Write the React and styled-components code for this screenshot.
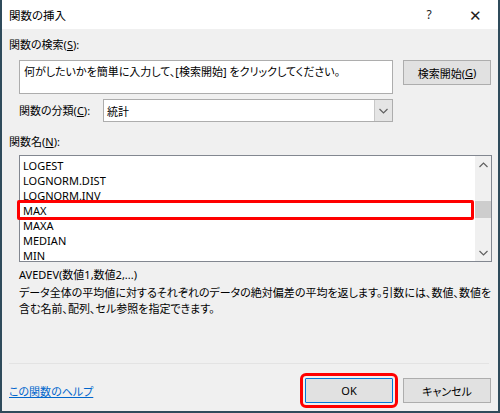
import React from "react";
import styled, { createGlobalStyle, css } from "styled-components";

const GlobalStyle = createGlobalStyle`
  html, body {
    margin: 0;
    padding: 0;
    background: #f0f0f0;
  }
  body {
    font-family: "Noto Sans", "Noto Sans CJK JP", sans-serif;
    font-size: 11px;
    color: #000;
    font-feature-settings: "palt";
  }
`;

const Window = styled.div`
  width: 500px;
  height: 413px;
  box-sizing: border-box;
  border: 2px solid #2f4b5b;
  border-top: none;
  background: #f0f0f0;
  display: flex;
  flex-direction: column;
`;

const TitleBar = styled.div`
  height: 29px;
  background: #fff;
  display: flex;
  align-items: center;
  padding-left: 7px;
  flex-shrink: 0;
`;

const Title = styled.div`
  flex: 1;
  font-size: 11.5px;
`;

const TitleButton = styled.div`
  width: 46px;
  text-align: center;
  font-size: ${(p) => (p.$large ? "15px" : "12px")};
  color: #222;
`;

const Body = styled.div`
  flex: 1;
  display: flex;
  flex-direction: column;
  padding: 8px 7px 8px 7px;
`;

const Label = styled.div`
  line-height: 16px;
  white-space: nowrap;
  ${(p) => p.$gap && `margin-top: ${p.$gap}px;`}
  ${(p) => p.$width && `width: ${p.$width}px;`}
`;

const Key = styled.span`
  text-decoration: underline;
`;

const SearchRow = styled.div`
  display: flex;
  align-items: flex-start;
  gap: 10px;
  margin: 7px 0 0 10px;
`;

const SearchBox = styled.div`
  width: 374px;
  height: 34px;
  box-sizing: border-box;
  background: #fff;
  border: 1px solid #adadad;
  padding: 3px 4px;
  line-height: 16px;
  white-space: nowrap;
`;

const Button = styled.div`
  width: 88px;
  height: 25px;
  box-sizing: border-box;
  background: #e1e1e1;
  border: 1px solid ${(p) => (p.$default ? "#0078d7" : "#adadad")};
  display: flex;
  align-items: center;
  justify-content: center;
  white-space: nowrap;
  ${(p) =>
    p.$marked &&
    css`
      outline: 3px solid #ff0000;
      outline-offset: 2px;
      border-radius: 1px;
    `}
`;

const CategoryRow = styled.div`
  display: flex;
  align-items: center;
  gap: 6px;
  margin: 5px 0 0 10px;
`;

const Combo = styled.div`
  width: 290px;
  height: 23px;
  box-sizing: border-box;
  background: #fff;
  border: 1px solid #adadad;
  display: flex;
  align-items: center;
  padding-left: 3px;
`;

const ComboText = styled.div`
  flex: 1;
`;

const ComboArrow = styled.div`
  width: 17px;
  height: 21px;
  background: #e5e5e5;
  border-left: 1px solid #c8c8c8;
  display: flex;
  align-items: center;
  justify-content: center;
`;

const ListBox = styled.div`
  margin: 5px 0 0 10px;
  width: 473px;
  height: 107px;
  box-sizing: border-box;
  background: #fff;
  border: 1px solid #828790;
  display: flex;
`;

const ListItems = styled.div`
  flex: 1;
  padding-top: 2px;
`;

const ListRow = styled.div`
  position: relative;
  height: 15px;
  line-height: 15px;
  padding-left: 3px;
  ${(p) =>
    p.$marked &&
    css`
      &::after {
        content: "";
        position: absolute;
        left: -3px;
        right: 1px;
        top: -3px;
        bottom: -2px;
        border: 3px solid #ff0000;
        border-radius: 2px;
      }
    `}
`;

const ScrollBar = styled.div`
  width: 16px;
  background: #f0f0f0;
  display: flex;
  flex-direction: column;
  align-items: center;
`;

const ScrollArrow = styled.div`
  height: 17px;
  display: flex;
  align-items: center;
  justify-content: center;
`;

const ScrollTrack = styled.div`
  flex: 1;
  width: 100%;
  padding-top: 28px;
  box-sizing: border-box;
`;

const ScrollThumb = styled.div`
  height: 17px;
  background: #cdcdcd;
`;

const Syntax = styled.div`
  margin: 5px 0 0 10px;
  line-height: 16px;
`;

const Description = styled.div`
  margin: 2px 0 0 10px;
  line-height: 16px;
  white-space: nowrap;
`;

const Spacer = styled.div`
  flex: 1;
`;

const Separator = styled.div`
  height: 1px;
  background: #e3e3e3;
  margin-right: 2px;
`;

const Footer = styled.div`
  display: flex;
  align-items: center;
  margin-top: 14px;
  gap: 10px;
`;

const HelpLink = styled.a`
  flex: 1;
  color: #0066cc;
  text-decoration: underline;
  cursor: pointer;
`;

function Chevron({ up }) {
  return (
    <svg width="9" height="6" viewBox="0 0 9 6">
      <path
        d={up ? "M0.5 5L4.5 1L8.5 5" : "M0.5 1L4.5 5L8.5 1"}
        fill="none"
        stroke="#606060"
        strokeWidth="1.2"
      />
    </svg>
  );
}

const functions = [
  "LOGEST",
  "LOGNORM.DIST",
  "LOGNORM.INV",
  "MAX",
  "MAXA",
  "MEDIAN",
  "MIN",
];

export default function App() {
  return (
    <>
      <GlobalStyle />
      <Window>
        <TitleBar>
          <Title>関数の挿入</Title>
          <TitleButton>?</TitleButton>
          <TitleButton $large>✕</TitleButton>
        </TitleBar>
        <Body>
          <Label>
            関数の検索(<Key>S</Key>):
          </Label>
          <SearchRow>
            <SearchBox>
              何がしたいかを簡単に入力して、[検索開始] をクリックしてください。
            </SearchBox>
            <Button>
              検索開始(<Key>G</Key>)
            </Button>
          </SearchRow>
          <CategoryRow>
            <Label $width={78}>
              関数の分類(<Key>C</Key>):
            </Label>
            <Combo>
              <ComboText>統計</ComboText>
              <ComboArrow>
                <Chevron />
              </ComboArrow>
            </Combo>
          </CategoryRow>
          <Label $gap={12}>
            関数名(<Key>N</Key>):
          </Label>
          <ListBox>
            <ListItems>
              {functions.map((name) => (
                <ListRow key={name} $marked={name === "MAX"}>
                  {name}
                </ListRow>
              ))}
            </ListItems>
            <ScrollBar>
              <ScrollArrow>
                <Chevron up />
              </ScrollArrow>
              <ScrollTrack>
                <ScrollThumb />
              </ScrollTrack>
              <ScrollArrow>
                <Chevron />
              </ScrollArrow>
            </ScrollBar>
          </ListBox>
          <Syntax>AVEDEV(数値1,数値2,...)</Syntax>
          <Description>
            データ全体の平均値に対するそれぞれのデータの絶対偏差の平均を返します。引数には、数値、数値を
            <br />
            含む名前、配列、セル参照を指定できます。
          </Description>
          <Spacer />
          <Separator />
          <Footer>
            <HelpLink>この関数のヘルプ</HelpLink>
            <Button $default $marked>
              OK
            </Button>
            <Button>キャンセル</Button>
          </Footer>
        </Body>
      </Window>
    </>
  );
}
